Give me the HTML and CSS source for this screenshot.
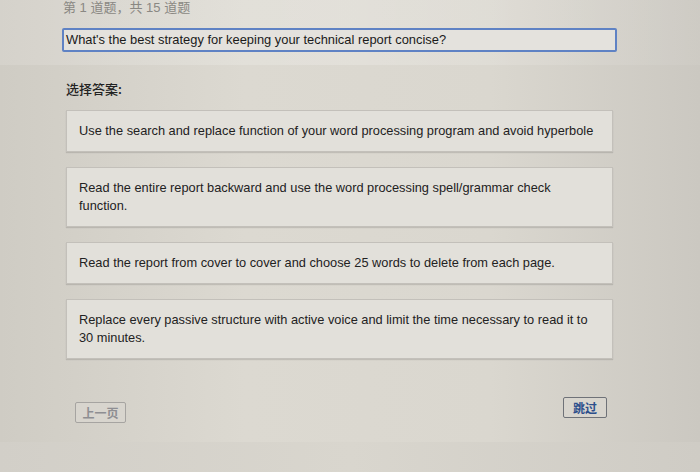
FILE: index.html
```html
<!DOCTYPE html>
<html>
<head>
<meta charset="utf-8">
<link rel="stylesheet" href="styles.css">
</head>
<body>
<div class="page">
  <div class="top">
    <div class="counter">第 1 道题，共 15 道题</div>
    <div class="question">What's the best strategy for keeping your technical report concise?</div>
  </div>
  <div class="main">
    <div class="label">选择答案:</div>
    <div class="options">
      <div class="option">Use the search and replace function of your word processing program and avoid hyperbole</div>
      <div class="option">Read the entire report backward and use the word processing spell/grammar check function.</div>
      <div class="option">Read the report from cover to cover and choose 25 words to delete from each page.</div>
      <div class="option">Replace every passive structure with active voice and limit the time necessary to read it to 30 minutes.</div>
    </div>
    <div class="nav">
      <button class="btn prev">上一页</button>
      <button class="btn skip">跳过</button>
    </div>
  </div>
  <div class="bottom"></div>
</div>
</body>
</html>
```
FILE: styles.css
```css
html, body {
  margin: 0;
  padding: 0;
}
body {
  width: 700px;
  height: 472px;
  overflow: hidden;
  background: #d6d3cb;
  font-family: "Liberation Sans", Arial, "Noto Sans CJK SC", sans-serif;
  color: #222;
}
.page {
  height: 472px;
  display: flex;
  flex-direction: column;
  background: linear-gradient(90deg, #cfccc4 0%, #dcd9d1 35%, #dad7cf 70%, #cbc8c1 100%);
}
.top {
  height: 65px;
  padding-left: 62px;
  background: linear-gradient(90deg, rgba(255,255,255,0.12), rgba(255,255,255,0.2) 50%, rgba(255,255,255,0.05));
}
.counter {
  font-family: "Liberation Sans", "Noto Sans CJK SC", sans-serif;
  font-size: 13px;
  color: #8a8883;
  line-height: 15px;
  padding-left: 1px;
}
.question {
  margin-top: 13px;
  width: 549px;
  height: 20px;
  border: 2px solid #5f82c4;
  border-radius: 2px;
  background: #e4e2dd;
  font-size: 12.9px;
  line-height: 20px;
  padding-left: 2px;
  color: #1a1a1a;
}
.main {
  flex: 1;
  padding-left: 66px;
  padding-right: 87px;
}
.label {
  margin-top: 16px;
  font-family: "Noto Sans CJK SC", sans-serif;
  font-size: 13px;
  font-weight: 500;
  line-height: 16px;
  color: #222;
}
.options {
  margin-top: 13px;
  display: flex;
  flex-direction: column;
  gap: 15px;
}
.option {
  background: #e2e0da;
  border: 1px solid #c3c0ba;
  box-shadow: 0 1px 1px rgba(0,0,0,0.12);
  font-size: 12.8px;
  line-height: 18px;
  padding: 11px 15px 11px 12px;
  color: #222;
}
.nav {
  margin-top: 38px;
  display: flex;
  justify-content: space-between;
  align-items: flex-start;
  padding-left: 9px;
  padding-right: 6px;
}
.btn {
  font-family: "Noto Sans CJK SC", sans-serif;
  font-size: 12px;
  font-weight: 700;
  background: #d8d5ce;
  border: 1px solid #8f8e8c;
  border-radius: 2px;
  padding: 0;
  line-height: 19px;
  height: 21px;
}
.prev {
  width: 51px;
  color: #8e8e92;
  margin-top: 5px;
  border-color: #a6a4a1;
}
.skip {
  width: 44px;
  color: #2d4f8c;
  border-color: #6f7278;
}
.bottom {
  height: 30px;
  background: linear-gradient(90deg, #d2cfc8, #d9d6ce 50%, #cfccc5);
}
```
